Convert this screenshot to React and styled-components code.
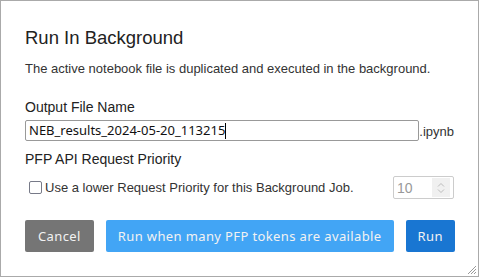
import React from 'react'
import styled, { createGlobalStyle } from 'styled-components'

const GlobalStyle = createGlobalStyle`
  html, body {
    margin: 0;
    padding: 0;
    background: #fff;
  }
  * {
    box-sizing: border-box;
  }
`

const Dialog = styled.div`
  position: relative;
  width: 479px;
  height: 277px;
  border: 1px solid #aaa;
  background: #fff;
  padding: 26px 24px 0 24px;
  font-family: 'Liberation Sans', Arial, sans-serif;
  color: #222;
`

const Title = styled.h2`
  margin: 0;
  font-size: 18.5px;
  font-weight: 400;
  line-height: 22px;
`

const Description = styled.p`
  margin: 12px 0 0;
  font-size: 13px;
  line-height: 16px;
  color: #333;
`

const Label = styled.div`
  margin-top: ${(p) => p.$top || 0}px;
  font-size: 14px;
  line-height: 18px;
`

const FileRow = styled.div`
  display: flex;
  align-items: flex-end;
  margin-top: 4px;
`

const FileInput = styled.div`
  width: 395px;
  height: 21px;
  border: 1px solid #999;
  border-radius: 2px;
  padding: 0 3px;
  font-family: 'Noto Sans', 'Open Sans', sans-serif;
  font-size: 13px;
  line-height: 19px;
  color: #111;
  display: flex;
  align-items: center;
`

const Caret = styled.span`
  display: inline-block;
  width: 1px;
  height: 16px;
  background: #000;
`

const Suffix = styled.span`
  font-size: 13px;
  line-height: 16px;
  color: #333;
  padding-bottom: 1px;
`

const PriorityRow = styled.div`
  display: flex;
  align-items: center;
  justify-content: space-between;
  margin-top: 8px;
  padding-left: 4px;
`

const CheckLabel = styled.label`
  display: flex;
  align-items: center;
  gap: 3px;
  font-size: 13px;
  color: #333;
`

const Box = styled.span`
  width: 13px;
  height: 13px;
  border: 1.5px solid #777a88;
  border-radius: 2px;
  background: #fff;
`

const NumberBox = styled.div`
  width: 61px;
  height: 23px;
  border: 1px solid #ccc;
  border-radius: 2px;
  display: flex;
  align-items: center;
  justify-content: space-between;
  padding: 0 3px 0 3px;
  font-size: 14px;
  color: #999;
`

const Spinner = styled.div`
  width: 18px;
  height: 19px;
  background: #f0f0f0;
  display: flex;
  flex-direction: column;
  align-items: center;
  justify-content: center;
  gap: 2px;
`

const Buttons = styled.div`
  display: flex;
  gap: 12px;
  margin-top: 21px;
`

const Button = styled.button`
  flex-shrink: 0;
  white-space: nowrap;
  height: 32px;
  padding: 0 ${(p) => p.$pad || 12}px;
  border: none;
  border-radius: 2px;
  background: ${(p) => p.$bg};
  color: #f2f2f2;
  font-family: 'Noto Sans', 'Open Sans', sans-serif;
  font-size: 13px;
  letter-spacing: 0.38px;
  cursor: pointer;
`

const Grip = styled.svg`
  position: absolute;
  right: 1px;
  bottom: 1px;
`

export default function App() {
  return (
    <>
      <GlobalStyle />
      <Dialog>
        <Title>Run In Background</Title>
        <Description>
          The active notebook file is duplicated and executed in the background.
        </Description>
        <Label $top={21}>Output File Name</Label>
        <FileRow>
          <FileInput>
            NEB_results_2024-05-20_113215
            <Caret />
          </FileInput>
          <Suffix>.ipynb</Suffix>
        </FileRow>
        <Label $top={9}>PFP API Request Priority</Label>
        <PriorityRow>
          <CheckLabel>
            <Box />
            Use a lower Request Priority for this Background Job.
          </CheckLabel>
          <NumberBox>
            10
            <Spinner>
              <svg width="8" height="5" viewBox="0 0 8 5">
                <path d="M1 4.5L4 1.5L7 4.5" fill="none" stroke="#bbb" strokeWidth="1" />
              </svg>
              <svg width="8" height="5" viewBox="0 0 8 5">
                <path d="M1 0.5L4 3.5L7 0.5" fill="none" stroke="#bbb" strokeWidth="1" />
              </svg>
            </Spinner>
          </NumberBox>
        </PriorityRow>
        <Buttons>
          <Button $bg="#757575" $pad={13}>Cancel</Button>
          <Button $bg="#42a5f5">Run when many PFP tokens are available</Button>
          <Button $bg="#1976d2">Run</Button>
        </Buttons>
        <Grip width="11" height="11" viewBox="0 0 11 11">
          <path d="M10 2L2 10M10 5L5 10M10 8L8 10" stroke="#999" strokeWidth="1" />
        </Grip>
      </Dialog>
    </>
  )
}
